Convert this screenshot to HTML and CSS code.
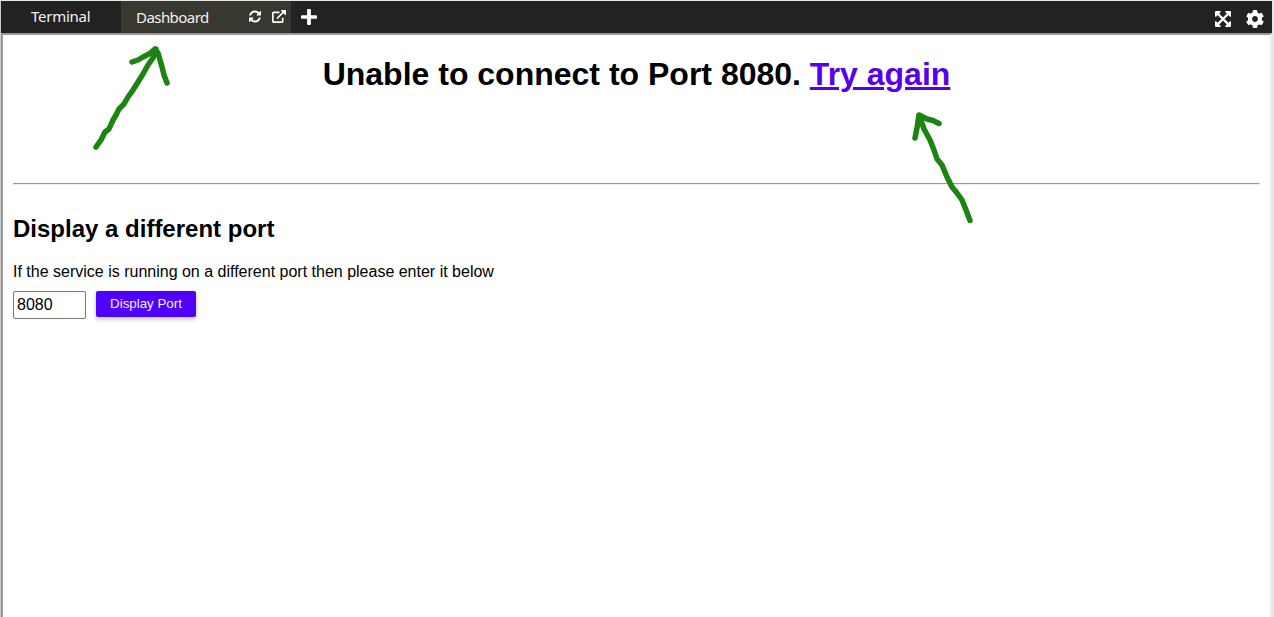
FILE: index.html
```html
<!DOCTYPE html>
<html lang="en">
<head>
<meta charset="utf-8">
<title>Dashboard</title>
<link rel="stylesheet" href="styles.css">
</head>
<body>
<div class="window">
  <header class="tabs">
    <div class="tab"><span class="label">Terminal</span></div>
    <div class="tab active">
      <span class="label">Dashboard</span>
      <svg class="refresh" viewBox="0 128 1536 1536"><path d="M1511 1056q0 5-1 7-64 268-268 434.500t-478 166.500q-146 0-282.500-55t-243.500-157l-129 129q-19 19-45 19t-45-19-19-45v-448q0-26 19-45t45-19h448q26 0 45 19t19 45-19 45l-137 137q71 66 161 102t187 36q134 0 250-65t186-179q11-17 53-117 8-23 30-23h192q13 0 22.500 9.500t9.500 22.500zm25-800v448q0 26-19 45t-45 19h-448q-26 0-45-19t-19-45 19-45l138-138q-148-137-349-137-134 0-250 65t-186 179q-11 17-53 117-8 23-30 23h-199q-13 0-22.500-9.500t-9.500-22.500v-7q65-268 270-434.500t480-166.500q146 0 284 55.500t245 156.500l130-129q19-19 45-19t45 19 19 45z"/></svg>
      <svg class="external" viewBox="0 0 14 13"><path class="line" d="M7.500 2.300H1.800Q.8 2.300.8 3.300V11.200Q.8 12.200 1.800 12.200H9.700Q10.700 12.200 10.700 11.200V7.800M5 8.500 12 1.500"/><path d="M9.300.1H13.500Q14 .1 14 .6V4.800L13.100 5 9.100 1z"/></svg>
    </div>
    <svg class="plus" viewBox="0 0 16 16"><path d="M6.100 1Q6.100 0 7.100 0H8.900Q9.900 0 9.900 1V6.200H15Q16 6.200 16 7.200V8.800Q16 9.800 15 9.800H9.900V15Q9.900 16 8.900 16H7.100Q6.100 16 6.100 15V9.800H1Q0 9.800 0 8.800V7.200Q0 6.200 1 6.200H6.100z"/></svg>
    <div class="tools">
      <svg class="expand" viewBox="0 0 16 16"><path class="line" d="M2.500 2.500 13.500 13.500M13.500 2.500 2.500 13.500"/><path d="M.7 0H5.200L6 .8 .8 6 0 5.200V.7zM10.800 0H15.300L16 .7V5.200L15.200 6 10 .8zM16 10.800V15.300L15.300 16H10.800L10 15.200 15.200 10zM5.200 16H.7L0 15.300V10.800L.8 10 6 15.200z"/></svg>
      <svg class="cog" viewBox="8 8 496 496"><path d="M487.400 315.700l-42.600-24.600c4.300-23.200 4.300-47 0-70.200l42.600-24.600c4.900-2.800 7.100-8.600 5.500-14-11.100-35.600-30-67.800-54.700-94.600-3.800-4.100-10-5.100-14.800-2.300L380.800 110c-17.900-15.400-38.500-27.300-60.800-35.100V25.800c0-5.600-3.900-10.500-9.400-11.700-36.700-8.200-74.300-7.800-109.200 0-5.500 1.200-9.400 6.100-9.400 11.700V75c-22.200 7.900-42.800 19.800-60.800 35.100L88.700 85.500c-4.900-2.800-11-1.900-14.800 2.300-24.700 26.700-43.600 58.900-54.700 94.600-1.700 5.400.6 11.200 5.500 14L67.300 221c-4.300 23.200-4.300 47 0 70.200l-42.600 24.600c-4.900 2.800-7.100 8.600-5.500 14 11.100 35.600 30 67.800 54.700 94.600 3.800 4.100 10 5.100 14.800 2.300l42.600-24.600c17.900 15.400 38.500 27.300 60.800 35.100v49.200c0 5.600 3.900 10.500 9.400 11.700 36.700 8.200 74.300 7.800 109.200 0 5.500-1.200 9.400-6.100 9.400-11.700v-49.200c22.200-7.900 42.800-19.800 60.800-35.100l42.600 24.600c4.900 2.800 11 1.900 14.800-2.300 24.700-26.700 43.600-58.900 54.700-94.600 1.500-5.500-.7-11.300-5.600-14.100zM256 336c-44.100 0-80-35.900-80-80s35.900-80 80-80 80 35.900 80 80-35.900 80-80 80z"/></svg>
    </div>
  </header>
  <main class="page">
    <h1>Unable to connect to Port 8080. <a href="#">Try again</a></h1>
    <hr>
    <h2>Display a different port</h2>
    <p>If the service is running on a different port then please enter it below</p>
    <form class="port-form">
      <input class="port" type="text" value="8080" aria-label="Port">
      <button class="submit" type="button">Display Port</button>
    </form>
  </main>
  <svg class="marks" viewBox="0 0 1274 617">
    <path d="M96 147 L101 140 L105 132 L109 129 L113 120 L116 115 L119 109 L124 104 L128 97 L133 90 L138 82 L143 74 L148 65 L153 58 L156 49 M132 62 L138 60 L143 57 L149 54 L155 49 M155 49 L158 53 L160 60 L162 67 L164 75 L167 83"/>
    <path d="M970 220.500 L966 210 L962 200 L957 193 L952 187 L947 177 L942 165 L937 159 L934 150 L930 140 L924 129 L919 115 M915 138 L917 128 L919 115 L927 119 L933 120.500 L939 123.500"/>
  </svg>
</div>
</body>
</html>
```
FILE: styles.css
```css
* { box-sizing: border-box; }
body {
  margin: 0;
  overflow: hidden;
  background: #fff;
  color: #000;
  font-family: "Liberation Sans", Arial, sans-serif;
}
.window {
  position: relative;
  display: flex;
  flex-direction: column;
  height: 617px;
  padding: 1px 2px 0 1px;
  background: linear-gradient(90deg, #c8cbca 1px, #e4e8e7 1px);
}
.tabs {
  display: flex;
  height: 32px;
  flex: none;
  background: #222;
  color: #fff;
  font: 15px/30px "Noto Sans", sans-serif;
}
.tabs svg { display: block; flex: none; fill: #fff; }
.tabs .line { fill: none; stroke: #fff; stroke-width: 1.7; }
.tab {
  display: flex;
  width: 120px;
  padding-left: 30px;
}
.tab .label { color: #f2f2f2; letter-spacing: -0.25px; }
.active {
  width: 170px;
  padding-left: 15px;
  background: #383830;
}
.active .label { width: 113px; padding-top: 1px; letter-spacing: -0.55px; }
.refresh { width: 12px; height: 13px; margin-top: 9px; }
.external { width: 14px; height: 13px; margin: 9px 0 0 11px; }
.plus { width: 16px; height: 16px; margin: 8px 0 0 10px; }
.tools {
  display: flex;
  gap: 15px;
  margin-left: auto;
  padding: 9px 8px 0 0;
}
.expand { width: 16px; height: 16px; margin-top: 1px; }
.tabs .expand .line { stroke-width: 2.4; }
.cog { width: 18px; height: 18px; }
.page {
  flex: 1;
  border: 2px solid #999;
  border-right-color: #eee;
  border-bottom: 0;
  padding: 21px 10px 0;
  background: #fff;
}
h1 {
  margin: 0 0 90px;
  font-size: 32px;
  line-height: 37px;
  text-align: center;
}
h1 a { color: #5500ee; text-decoration-thickness: 3px; }
hr {
  height: 2px;
  margin: 0;
  border: 1px solid;
  border-color: #999 #eee #eee #999;
}
h2 {
  margin: 30px 0 0;
  font-size: 24px;
  line-height: 28px;
}
p {
  margin: 20px 0 10px;
  font-size: 16px;
  line-height: 18px;
}
.port-form {
  display: flex;
  align-items: flex-start;
  gap: 10px;
}
.port {
  width: 73px;
  height: 28px;
  border: 1px solid #767676;
  border-radius: 2px;
  padding: 0 3px;
  color: #000;
  font: 16px "Liberation Sans", sans-serif;
}
.submit {
  width: 100px;
  height: 26px;
  border: 0;
  border-radius: 2px;
  padding: 0 0 2px;
  background: #5000ff;
  box-shadow: 0 2px 5px rgba(0, 0, 0, .26);
  color: #f4f0ff;
  font: 13.333px "Liberation Sans", sans-serif;
}
.marks {
  position: absolute;
  inset: 0;
  width: 1274px;
  height: 617px;
  fill: none;
  stroke: #1c8410;
  stroke-width: 5.5;
  stroke-linecap: round;
  stroke-linejoin: round;
  pointer-events: none;
}
```
